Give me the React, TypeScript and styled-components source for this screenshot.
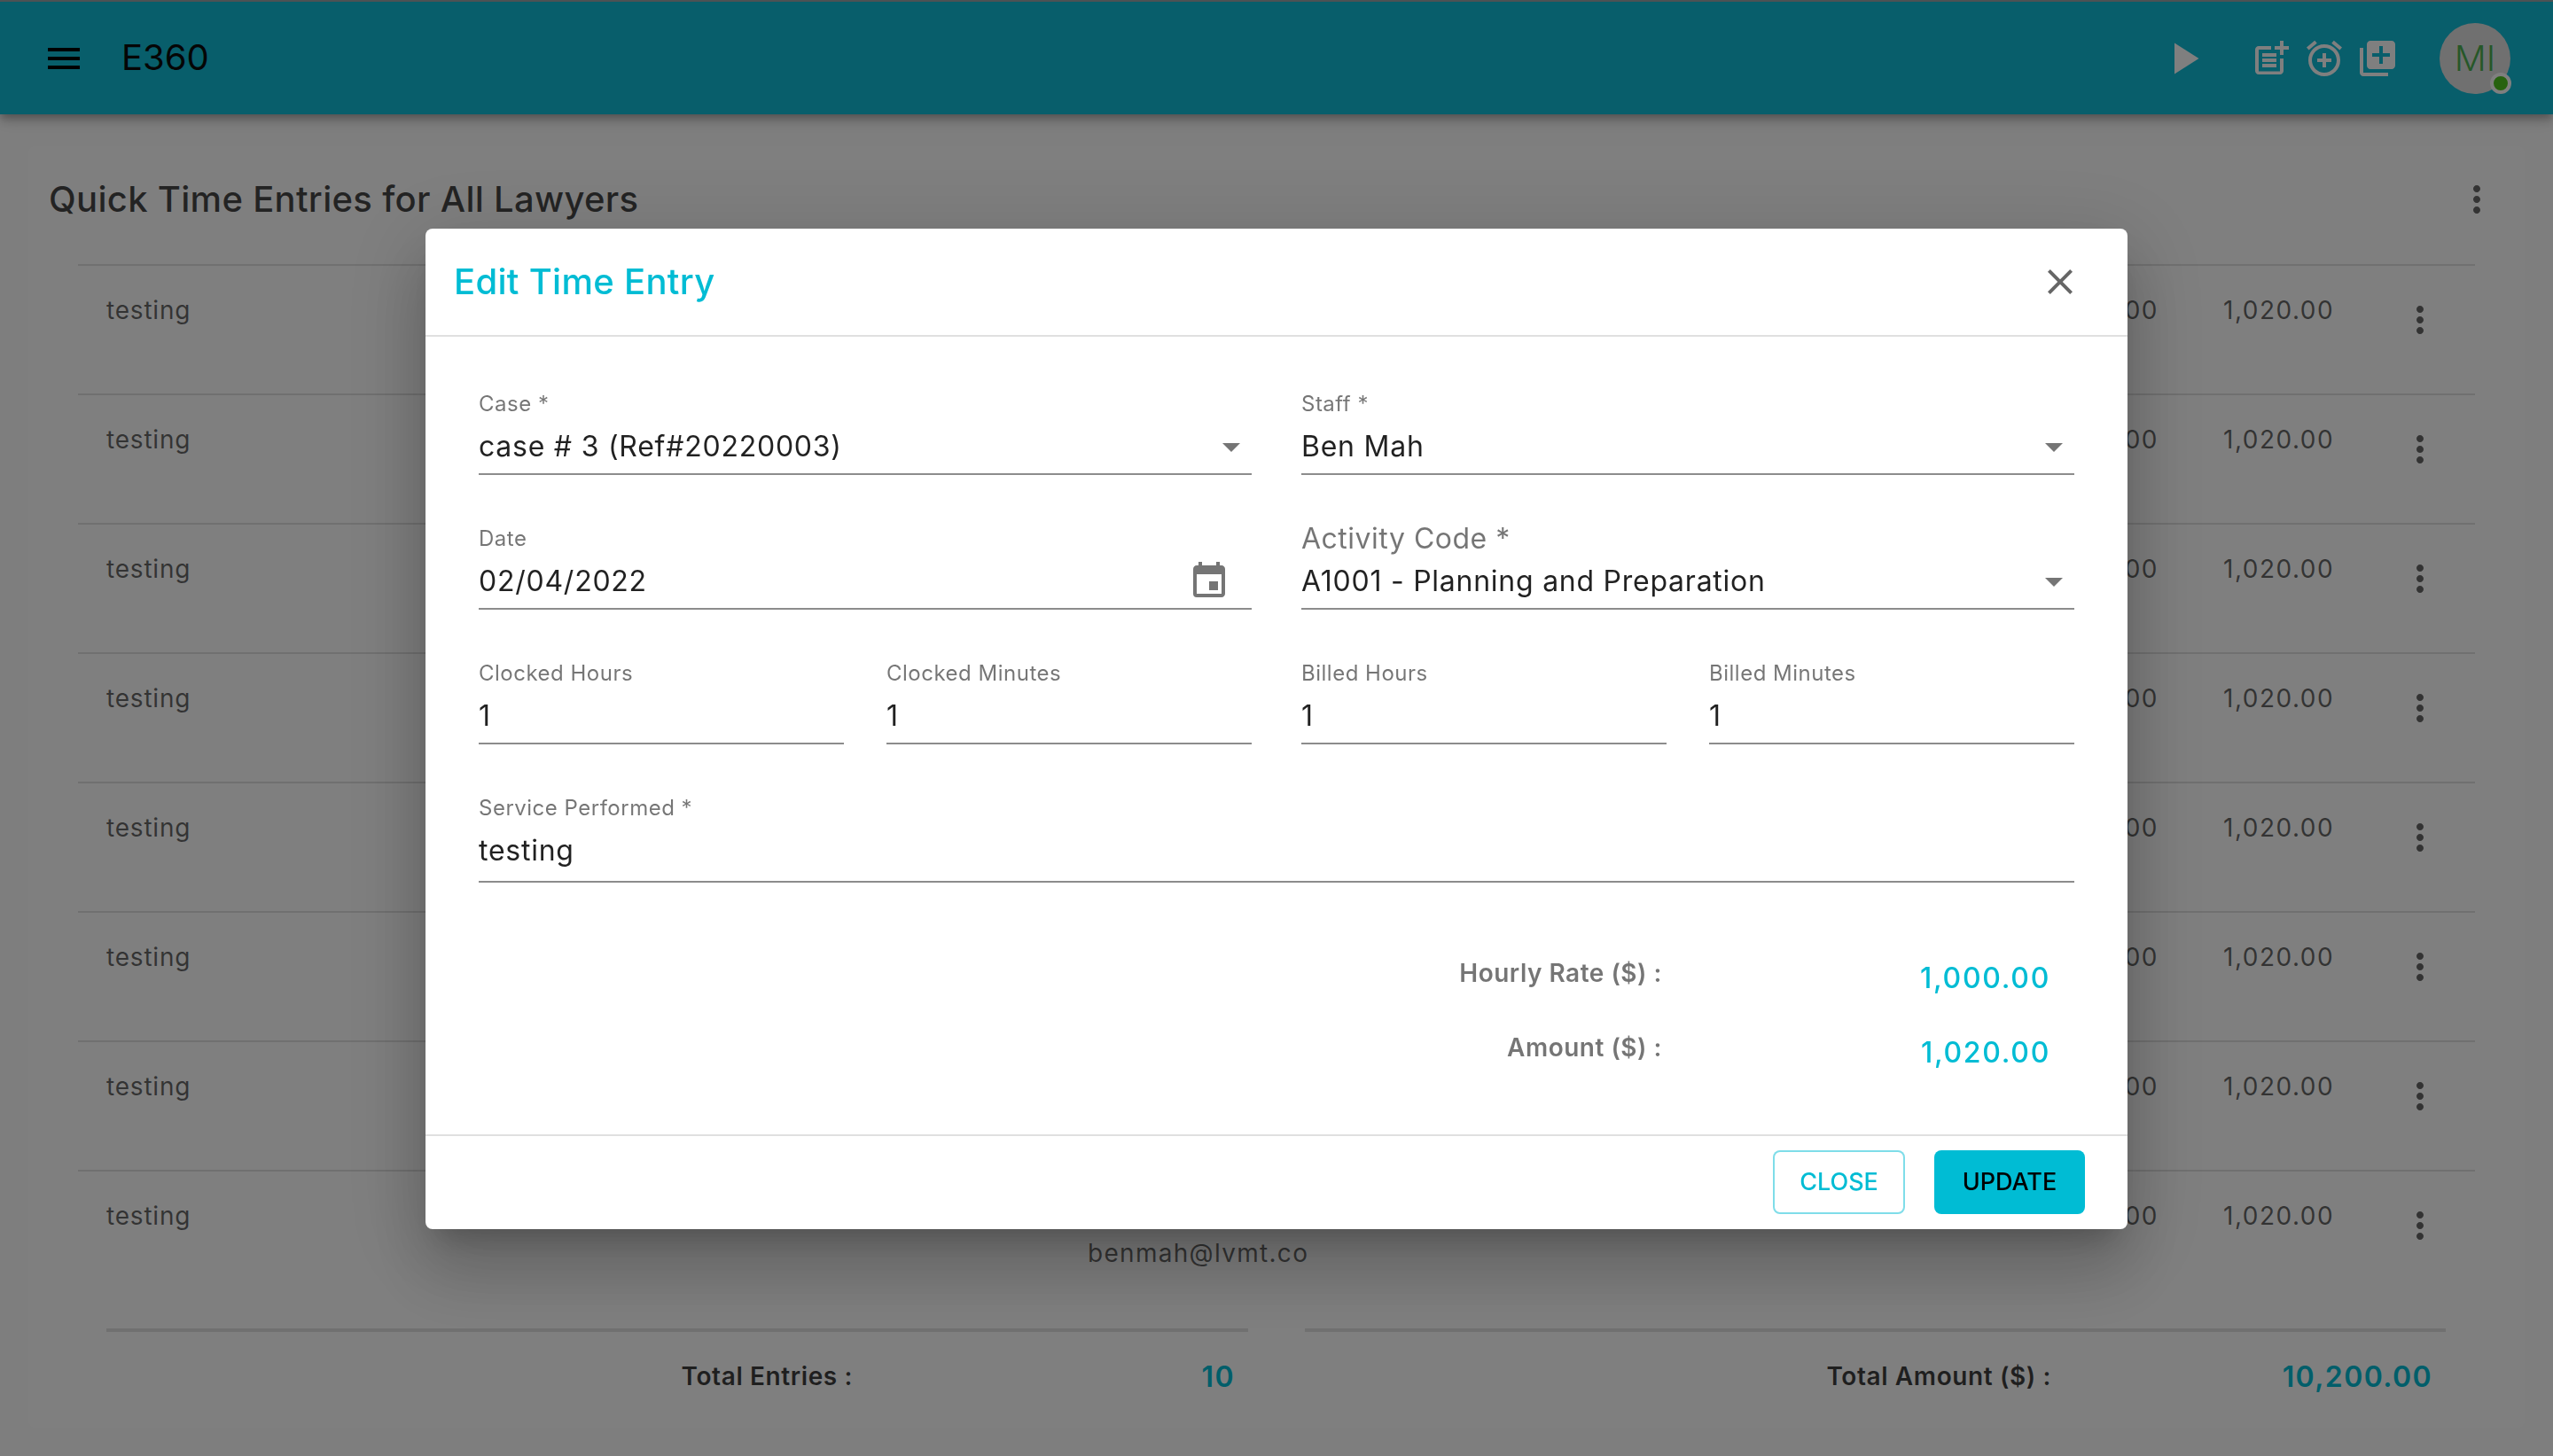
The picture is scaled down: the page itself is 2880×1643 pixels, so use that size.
import React from 'react';
import styled, { createGlobalStyle } from 'styled-components';
import {
  MdAlarmAdd,
  MdArrowDropDown,
  MdClose,
  MdEvent,
  MdLibraryAdd,
  MdMenu,
  MdMoreVert,
  MdPlayArrow,
  MdPostAdd,
} from 'react-icons/md';

const FONT = '"Inter", "Liberation Sans", sans-serif';
const CYAN = '#00bcd4';

const rows = Array.from({ length: 8 }, (_, i) => i);

const App = () => {
  return (
    <>
      <GlobalStyle />
      <AppBar>
        <IconSlot>
          <MdMenu size={48} />
        </IconSlot>
        <Brand>E360</Brand>
        <AppBarActions>
          <WhiteIcon $mr={33}>
            <MdPlayArrow size={60} />
          </WhiteIcon>
          <WhiteIcon>
            <MdPostAdd size={48} />
          </WhiteIcon>
          <WhiteIcon>
            <MdAlarmAdd size={48} />
          </WhiteIcon>
          <WhiteIcon>
            <MdLibraryAdd size={48} />
          </WhiteIcon>
          <AvatarWrap>
            <Avatar>MI</Avatar>
            <OnlineDot />
          </AvatarWrap>
        </AppBarActions>
      </AppBar>

      <Card>
        <CardHead>
          <CardTitle>Quick Time Entries for All Lawyers</CardTitle>
          <DarkIcon>
            <MdMoreVert size={48} />
          </DarkIcon>
        </CardHead>
        <List>
          {rows.map((i) => (
            <Row key={i}>
              <Cell>testing</Cell>
              <StaffCell>
                Ben Mah
                <br />
                benmah@lvmt.co
              </StaffCell>
              <NumberCell $align="right">1,000.00</NumberCell>
              <NumberCell $pad={73}>1,020.00</NumberCell>
              <RowMenu>
                <MdMoreVert size={48} />
              </RowMenu>
            </Row>
          ))}
        </List>
        <Totals>
          <TotalBlock $pad={15}>
            <TotalLabel>Total Entries :</TotalLabel>
            <TotalValue>10</TotalValue>
          </TotalBlock>
          <TotalBlock $pad={15}>
            <TotalLabel>Total Amount ($) :</TotalLabel>
            <TotalValue>10,200.00</TotalValue>
          </TotalBlock>
        </Totals>
      </Card>

      <Backdrop>
        <Dialog>
          <DialogHead>
            <DialogTitle>Edit Time Entry</DialogTitle>
            <CloseIcon>
              <MdClose size={48} />
            </CloseIcon>
          </DialogHead>
          <DialogBody>
            <FormGrid>
              <Field>
                <Label>Case *</Label>
                <Control>
                  <Value>case # 3 (Ref#20220003)</Value>
                  <Caret>
                    <MdArrowDropDown size={48} />
                  </Caret>
                </Control>
              </Field>
              <Field>
                <Label>Staff *</Label>
                <Control>
                  <Value>Ben Mah</Value>
                  <Caret>
                    <MdArrowDropDown size={48} />
                  </Caret>
                </Control>
              </Field>
              <Field>
                <Label>Date</Label>
                <Control>
                  <Value>02/04/2022</Value>
                  <CalendarIcon>
                    <MdEvent size={48} />
                  </CalendarIcon>
                </Control>
              </Field>
              <Field>
                <Label $big>Activity Code *</Label>
                <Control>
                  <Value>A1001 - Planning and Preparation</Value>
                  <Caret>
                    <MdArrowDropDown size={48} />
                  </Caret>
                </Control>
              </Field>
              <SplitField>
                <Field>
                  <Label>Clocked Hours</Label>
                  <Control>
                    <Value>1</Value>
                  </Control>
                </Field>
                <Field>
                  <Label>Clocked Minutes</Label>
                  <Control>
                    <Value>1</Value>
                  </Control>
                </Field>
              </SplitField>
              <SplitField>
                <Field>
                  <Label>Billed Hours</Label>
                  <Control>
                    <Value>1</Value>
                  </Control>
                </Field>
                <Field>
                  <Label>Billed Minutes</Label>
                  <Control>
                    <Value>1</Value>
                  </Control>
                </Field>
              </SplitField>
              <WideField>
                <Label>Service Performed *</Label>
                <Control $tall>
                  <Value>testing</Value>
                </Control>
              </WideField>
            </FormGrid>
            <RateRow>
              <RateLabel>Hourly Rate ($) :</RateLabel>
              <RateValue>1,000.00</RateValue>
            </RateRow>
            <RateRow>
              <RateLabel>Amount ($) :</RateLabel>
              <RateValue>1,020.00</RateValue>
            </RateRow>
          </DialogBody>
          <DialogFoot>
            <OutlineButton>CLOSE</OutlineButton>
            <SolidButton>UPDATE</SolidButton>
          </DialogFoot>
        </Dialog>
      </Backdrop>
    </>
  );
};

const GlobalStyle = createGlobalStyle`
  html, body {
    margin: 0;
    padding: 0;
    height: 100%;
    background: #fcfcfc;
    overflow: hidden;
  }
  * {
    box-sizing: border-box;
  }
  body {
    font-family: ${FONT};
  }
`;

const AppBar = styled.header`
  height: 129px;
  display: flex;
  align-items: center;
  padding: 0 48px;
  background: #10bcd6;
  border-top: 2px solid #9aa4a8;
  box-shadow: 0 4px 8px -2px rgba(0, 0, 0, 0.2), 0 8px 10px 0 rgba(0, 0, 0, 0.14),
    0 2px 20px 0 rgba(0, 0, 0, 0.12);
`;

const IconSlot = styled.div`
  display: flex;
  color: #000;
`;

const Brand = styled.div`
  margin: -2px 0 0 41px;
  font-size: 40px;
  color: #0a0a0a;
`;

const AppBarActions = styled.div`
  margin-left: auto;
  display: flex;
  align-items: center;
  gap: 12px;
`;

const WhiteIcon = styled.div<{ $mr?: number }>`
  display: flex;
  color: #fff;
  margin-right: ${({ $mr }) => $mr ?? 0}px;
`;

const AvatarWrap = styled.div`
  position: relative;
  margin-left: 34px;
`;

const Avatar = styled.div`
  width: 80px;
  height: 80px;
  border-radius: 50%;
  background: #e0e0e0;
  display: flex;
  align-items: center;
  justify-content: center;
  font-size: 40px;
  font-weight: 300;
  color: #4caf50;
`;

const OnlineDot = styled.span`
  position: absolute;
  right: -1px;
  bottom: 0;
  width: 24px;
  height: 24px;
  border-radius: 50%;
  background: #4fc41f;
  border: 4px solid #fff;
`;

const Card = styled.main`
  margin: 36px 32px 0;
  height: 1446px;
  background: #fff;
  border-radius: 8px;
`;

const CardHead = styled.div`
  display: flex;
  align-items: center;
  justify-content: space-between;
  height: 133px;
  padding: 0 0 14px 23px;
`;

const CardTitle = styled.h1`
  margin: 0;
  font-size: 40px;
  font-weight: 500;
  letter-spacing: 0.3px;
  color: rgba(0, 0, 0, 0.72);
`;

const DarkIcon = styled.div`
  display: flex;
  color: rgba(0, 0, 0, 0.6);
  margin-right: 30px;
`;

const List = styled.div`
  margin: 0 56px;
`;

const Row = styled.div`
  height: 146px;
  border-top: 2px solid #e0e0e0;
  padding: 32px 0 0 32px;
  display: grid;
  grid-template-columns: 1107px 260px 948px 271px 48px;
  align-items: start;
  &:last-child {
    height: 179px;
  }
`;

const Cell = styled.div`
  font-size: 28px;
  line-height: 36px;
  letter-spacing: 0.8px;
  color: rgba(0, 0, 0, 0.6);
`;

const StaffCell = styled(Cell)`
  line-height: 40px;
  letter-spacing: 1.3px;
  white-space: nowrap;
`;

const NumberCell = styled(Cell)<{ $align?: string; $pad?: number }>`
  text-align: ${({ $align }) => $align ?? 'left'};
  padding-left: ${({ $pad }) => $pad ?? 0}px;
  letter-spacing: 1.5px;
`;

const RowMenu = styled.div`
  display: flex;
  margin-top: 5px;
  color: rgba(0, 0, 0, 0.6);
`;

const Totals = styled.div`
  display: grid;
  grid-template-columns: 1288px 1287px;
  column-gap: 64px;
  margin: 0 59px 0 88px;
`;

const TotalBlock = styled.div<{ $pad: number }>`
  border-top: 4px solid #e0e0e0;
  display: grid;
  grid-template-columns: 842px 1fr;
  align-items: center;
  height: 104px;
  padding-right: ${({ $pad }) => $pad}px;
`;

const TotalLabel = styled.div`
  font-size: 28px;
  font-weight: 600;
  letter-spacing: 0.6px;
  text-align: right;
  color: rgba(0, 0, 0, 0.75);
`;

const TotalValue = styled.div`
  font-size: 32px;
  font-weight: 600;
  text-align: right;
  letter-spacing: 1.4px;
  color: ${CYAN};
`;

const Backdrop = styled.div`
  position: fixed;
  inset: 0;
  display: flex;
  align-items: center;
  justify-content: center;
  background: rgba(0, 0, 0, 0.5);
`;

const Dialog = styled.section`
  width: 1920px;
  height: 1129px;
  margin-top: 1px;
  display: flex;
  flex-direction: column;
  background: #fff;
  border-radius: 8px;
  box-shadow: 0 22px 30px -14px rgba(0, 0, 0, 0.2), 0 48px 76px 6px rgba(0, 0, 0, 0.14),
    0 18px 92px 16px rgba(0, 0, 0, 0.12);
`;

const DialogHead = styled.div`
  height: 122px;
  flex: none;
  display: flex;
  align-items: center;
  justify-content: space-between;
  padding: 0 52px 0 32px;
  border-bottom: 2px solid #e0e0e0;
`;

const DialogTitle = styled.h2`
  margin: 0;
  font-size: 40px;
  font-weight: 500;
  letter-spacing: 0.3px;
  color: ${CYAN};
`;

const CloseIcon = styled.div`
  display: flex;
  color: rgba(0, 0, 0, 0.6);
`;

const DialogBody = styled.div`
  flex: 1;
  padding: 56px 60px 0;
`;

const FormGrid = styled.div`
  display: grid;
  grid-template-columns: 1fr 1fr;
  column-gap: 56px;
  row-gap: 52px;
  margin-bottom: 82px;
`;

const Field = styled.div`
  display: flex;
  flex-direction: column;
  min-width: 0;
`;

const WideField = styled(Field)`
  grid-column: 1 / -1;
`;

const SplitField = styled.div`
  display: grid;
  grid-template-columns: 1fr 1fr;
  column-gap: 48px;
`;

const Label = styled.label<{ $big?: boolean }>`
  align-self: flex-start;
  height: 36px;
  line-height: 39px;
  font-size: ${({ $big }) => ($big ? 32 : 24)}px;
  letter-spacing: 0.5px;
  color: rgba(0, 0, 0, 0.54);
  white-space: nowrap;
`;

const Control = styled.div<{ $tall?: boolean }>`
  height: ${({ $tall }) => ($tall ? 68 : 64)}px;
  display: flex;
  align-items: flex-start;
  justify-content: space-between;
  padding-top: 12px;
  border-bottom: 2px solid rgba(0, 0, 0, 0.45);
`;

const Value = styled.div`
  font-size: 32px;
  line-height: 40px;
  letter-spacing: 0.75px;
  color: rgba(0, 0, 0, 0.87);
  white-space: nowrap;
`;

const Caret = styled.div`
  display: flex;
  margin: -4px -1px 0 0;
  color: rgba(0, 0, 0, 0.54);
`;

const CalendarIcon = styled.div`
  display: flex;
  margin: -4px 24px 0 0;
  color: rgba(0, 0, 0, 0.54);
`;

const RateRow = styled.div`
  display: grid;
  grid-template-columns: 1335px 1fr;
  height: 84px;
  padding-right: 27px;
`;

const RateLabel = styled.div`
  font-size: 28px;
  font-weight: 600;
  line-height: 40px;
  letter-spacing: 0.5px;
  text-align: right;
  color: rgba(0, 0, 0, 0.54);
`;

const RateValue = styled.div`
  padding-top: 6px;
  font-size: 32px;
  font-weight: 500;
  line-height: 40px;
  letter-spacing: 1.7px;
  text-align: right;
  color: ${CYAN};
`;

const DialogFoot = styled.div`
  height: 107px;
  flex: none;
  display: flex;
  justify-content: flex-end;
  align-items: flex-start;
  gap: 33px;
  padding: 16px 48px 0;
  border-top: 2px solid #e0e0e0;
`;

const BaseButton = styled.button`
  height: 72px;
  border-radius: 8px;
  font-family: ${FONT};
  font-size: 27px;
  font-weight: 500;
`;

const OutlineButton = styled(BaseButton)`
  width: 149px;
  background: #fff;
  border: 2px solid rgba(0, 188, 212, 0.5);
  color: ${CYAN};
`;

const SolidButton = styled(BaseButton)`
  width: 170px;
  background: ${CYAN};
  border: 0;
  color: #000;
`;

export default App;
